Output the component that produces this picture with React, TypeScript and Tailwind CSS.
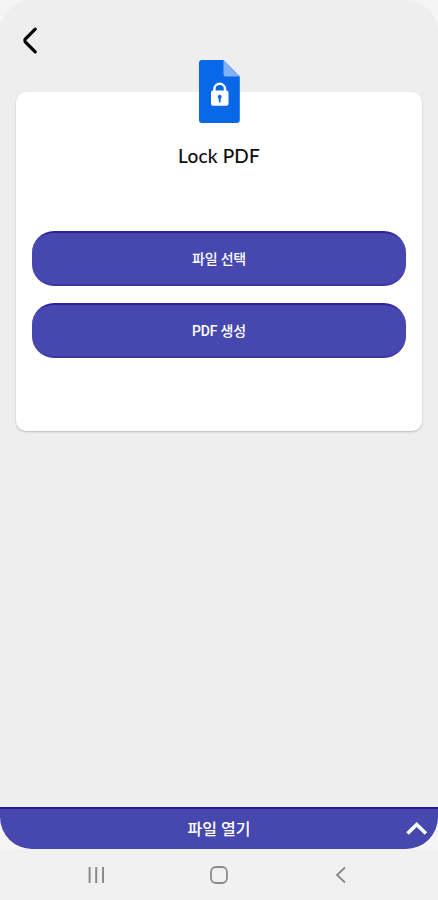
import { useState } from 'react';

const actions = ['파일 선택', 'PDF 생성'];

function LockFileIcon() {
  return (
    <svg width="42" height="64" viewBox="0 0 42 64">
      <path d="M4 0H25.5L41.8 16.5V60a3 3 0 0 1-3 3H4a3 3 0 0 1-3-3V3a3 3 0 0 1 3-3Z" fill="#0868e8" />
      <path d="M25.5 0 41.8 16.5H28a2.5 2.5 0 0 1-2.5-2.5Z" fill="#82b0fb" />
      <path d="M16.4 31.5V29a5.3 5.3 0 0 1 10.6 0v2.5" fill="none" stroke="#fff" strokeWidth="2.4" />
      <rect x="13" y="30.5" width="17.5" height="15.3" rx="2" fill="#fff" />
      <path d="M21.7 34.7a2.1 2.1 0 0 1 1.1 3.8l-.4 4h-1.4l-.4-4a2.1 2.1 0 0 1 1.1-3.8Z" fill="#0868e8" />
    </svg>
  );
}

export default function App() {
  const [open, setOpen] = useState(false);

  return (
    <div className="flex h-[900px] w-[438px] flex-col bg-[#f5f5f6] font-[Roboto,'Noto_Sans_CJK_KR',sans-serif]">
      <div className="flex h-[807px] flex-col rounded-t-[32px] bg-[#eeeeee]">
        <header className="h-[92px] shrink-0 pl-[21px] pt-[25px]">
          <button className="block">
            <svg width="18" height="30" viewBox="0 0 18 30" fill="none" stroke="#000" strokeWidth="3.3" strokeLinecap="round" strokeLinejoin="round">
              <path d="M14.2 4.2 4.2 14.2Q3.3 15.5 4.2 16.8L14.2 26.8" />
            </svg>
          </button>
        </header>

        <main className="mx-4 flex h-[339px] flex-col items-center rounded-[10px] bg-white px-4 shadow-[0_1px_2px_rgba(0,0,0,0.22)]">
          <div className="-mt-8">
            <LockFileIcon />
          </div>
          <h1 className="mt-[18px] h-[28px] font-[Lato,sans-serif] text-[19px] font-medium leading-[28px] tracking-[0.2px] text-[#0b0b0b]">
            Lock PDF
          </h1>
          <div className="mt-[61px] flex w-full flex-col gap-[17px]">
            {actions.map(label => (
              <button
                key={label}
                className="h-[55px] rounded-[22px] border-y-2 border-t-[#2a249b] border-b-[#3c37a5] bg-[#4647af] pt-px text-[14px] font-medium tracking-[-0.2px] text-white"
              >
                {label}
              </button>
            ))}
          </div>
        </main>
      </div>

      <button
        onClick={() => setOpen(!open)}
        className="grid h-[42px] grid-cols-[32px_1fr_32px] items-center rounded-b-[32px] border-t-2 border-[#211991] bg-[#4647af] text-[16px] font-medium text-white shadow-[0_1px_0_#ffffff]"
      >
        <span className="col-start-2 pt-0.5">파일 열기</span>
        <svg className={open ? 'rotate-180' : ''} width="22" height="16" viewBox="0 0 22 16" fill="none" stroke="#fff" strokeWidth="3.6">
          <path d="m1.5 12.5 9.2-9 9.2 9" />
        </svg>
      </button>

      <nav className="flex h-[51px] items-center justify-between bg-[#f1f1f1] px-[87px]">
        <svg width="18" height="18" viewBox="0 0 18 18" stroke="#8b8b8b" strokeWidth="2">
          <path d="M2.6 1v16M9.2 1v16M16 1v16" />
        </svg>
        <svg width="18" height="18" viewBox="0 0 18 18" fill="none" stroke="#8b8b8b" strokeWidth="1.8">
          <rect x="1" y="1" width="16" height="16" rx="5" />
        </svg>
        <svg width="18" height="18" viewBox="0 0 18 18" fill="none" stroke="#888" strokeWidth="1.8">
          <path d="m12 1.5-8 7.5 8 7.5" />
        </svg>
      </nav>
    </div>
  );
}
